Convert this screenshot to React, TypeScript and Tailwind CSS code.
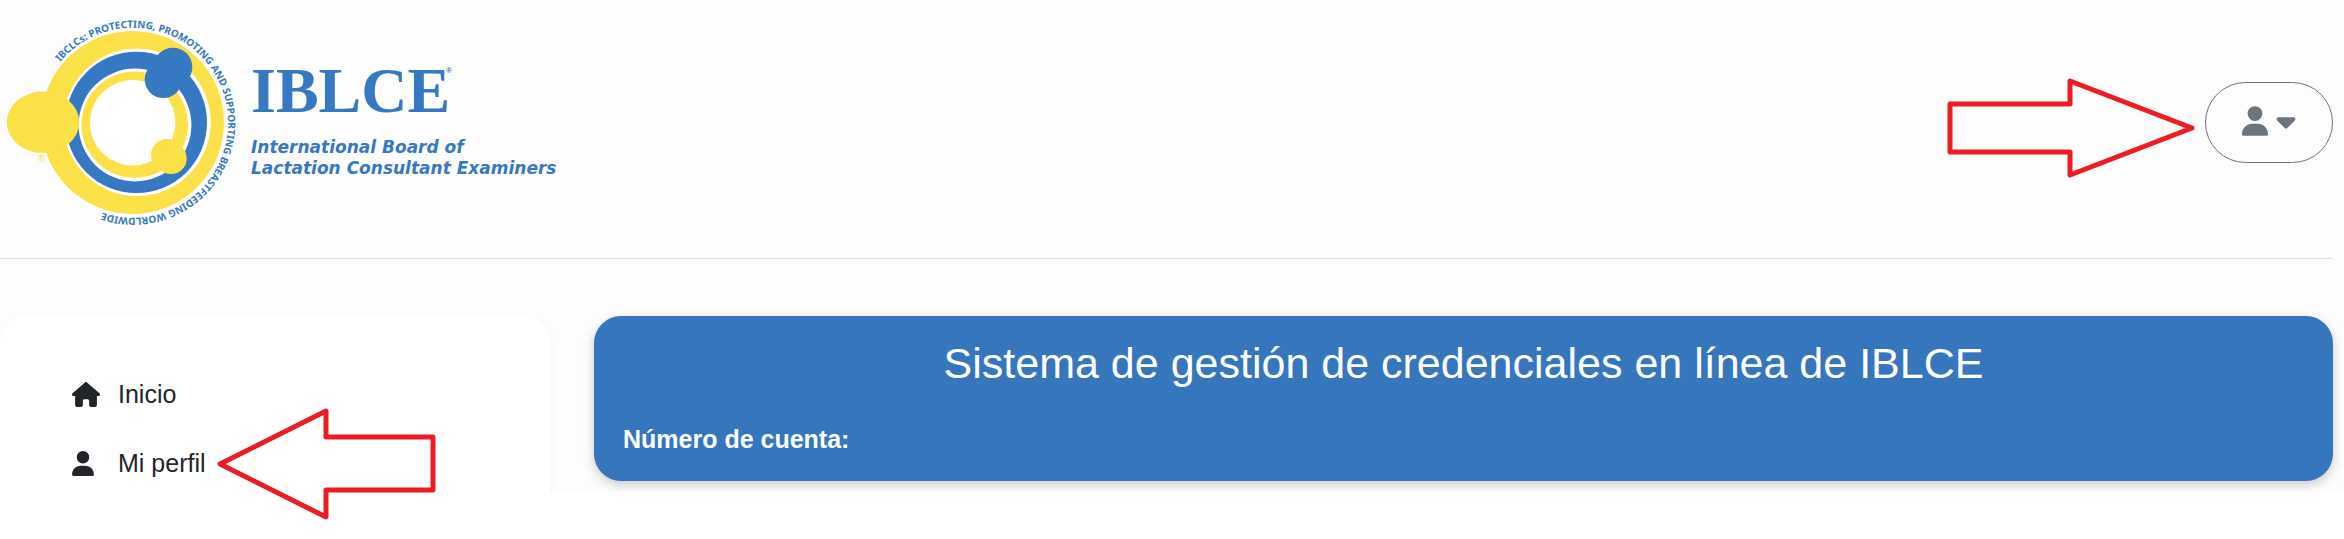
import React from 'react';
import { FaCaretDown, FaHouse, FaUser } from 'react-icons/fa6';

const menuItems = [
  { label: 'Inicio', icon: FaHouse, iconSize: 'h-[25px] w-7' },
  { label: 'Mi perfil', icon: FaUser, iconSize: 'h-[25px] w-[22px]' }
];

function Logo() {
  return (
    <svg viewBox="0 0 560 240" className="w-[560px] h-[240px] shrink-0" role="img" aria-label="IBLCE">
      <defs>
        <path id="motto" d="M 60 62 A 95 95 0 1 1 98 211" />
      </defs>

      {/* rings */}
      <circle cx="132.5" cy="122.5" r="91.5" fill="#fae148" />
      <circle cx="137" cy="122.4" r="73.7" fill="#fff" />
      <circle cx="136.3" cy="122.4" r="70.7" fill="#3778c2" />
      <circle cx="135" cy="125" r="56.4" fill="#fff" />
      <circle cx="134.7" cy="124.6" r="53.2" fill="#fae148" />
      <circle cx="132.7" cy="122.8" r="42.8" fill="#fff" />

      {/* heads */}
      <ellipse cx="43" cy="122.3" rx="36.3" ry="30.7" fill="#fae148" />
      <g fill="#3778c2">
        <circle cx="173" cy="67" r="19.3" />
        <circle cx="163.3" cy="79.5" r="18.6" />
      </g>
      <g fill="#fae148">
        <circle cx="166.7" cy="154.8" r="15.7" />
        <circle cx="171" cy="158.4" r="15.7" />
      </g>

      <text x="38" y="162" fontSize="10" fill="#fae148" fontFamily="Liberation Sans, sans-serif">®</text>
      <text fontSize="10" fontWeight="700" fill="#3778c2" fontFamily="Noto Sans, sans-serif">
        <textPath href="#motto">
          IBCLCs: PROTECTING, PROMOTING AND SUPPORTING BREASTFEEDING WORLDWIDE
        </textPath>
      </text>

      <text x="251" y="112" fontSize="64" fontWeight="700" fill="#3778c2" fontFamily="Liberation Serif, serif">
        IBLCE
      </text>
      <text x="446" y="73" fontSize="8" fontWeight="700" fill="#3778c2" fontFamily="Liberation Sans, sans-serif">®</text>
      <g fontSize="17" fontWeight="700" fontStyle="italic" fill="#3778c2" fontFamily="Verdana, DejaVu Sans, sans-serif">
        <text x="251" y="153">International Board of</text>
        <text x="251" y="174">Lactation Consultant Examiners</text>
      </g>
    </svg>
  );
}

export default function App() {
  return (
    <div className="bg-white pb-12 font-['Liberation_Sans',Arial,sans-serif] text-[#212529]">
      <div className="bg-[#fdfdfd]">
        <header className="mr-[11px] flex items-start justify-between border-b border-[#dfe0e8] pb-[18px]">
          <Logo />
          <div className="flex items-center gap-2 pt-[78px]">
            <svg
              viewBox="0 0 250 100"
              className="h-[100px] w-[250px]"
              fill="none"
              stroke="#ed1c24"
              strokeWidth="5"
              strokeLinejoin="round"
              aria-hidden="true"
            >
              <path d="M3 26H123V3L245 50L123 97V74H3Z" />
            </svg>
            <button
              type="button"
              aria-label="Cuenta"
              className="mb-[11px] flex h-[81px] w-32 items-center justify-center gap-2 rounded-full border border-[#6c757d] pb-[3px] text-[#6c757d]"
            >
              <FaUser className="h-[30px] w-[26px]" />
              <FaCaretDown className="h-[30px] w-5" />
            </button>
          </div>
        </header>
      </div>

      <main className="relative">
        <div className="flex gap-11 overflow-hidden bg-[#fdfdfd] pr-[11px] pt-[57px]">
          <nav className="w-[550px] shrink-0 rounded-t-[27px] bg-white pb-[10px] pl-[72px] pt-[59px] shadow-[0_4px_8px_rgba(0,0,0,0.05)]">
            <ul className="flex flex-col gap-[31px]">
              {menuItems.map((item) => {
                const Icon = item.icon;
                return (
                  <li key={item.label}>
                    <a href="#" className="flex items-center text-[25px] leading-[38px]">
                      <span className="w-[46px]">
                        <Icon className={item.iconSize} />
                      </span>
                      {item.label}
                    </a>
                  </li>
                );
              })}
            </ul>
          </nav>

          <section className="mb-[11px] flex-1 rounded-[27px] bg-[#3676bd] px-[29px] pb-[22px] pt-5 text-white shadow-[0_4px_12px_rgba(0,0,0,0.2)]">
            <h1 className="text-center text-[43px] leading-[54px]">
              Sistema de gestión de credenciales en línea de IBLCE
            </h1>
            <p className="mt-[30px] text-[25px] font-bold leading-[38px]">Número de cuenta:</p>
          </section>
        </div>

        {/* callout over the profile link */}
        <svg
          viewBox="0 0 220 112"
          className="absolute left-[216px] top-[149px] h-[112px] w-[220px]"
          fill="none"
          stroke="#ed1c24"
          strokeWidth="5"
          strokeLinejoin="round"
          aria-hidden="true"
        >
          <path d="M217 29H110V3L4 56L110 109V82H217Z" />
        </svg>
      </main>
    </div>
  );
}
